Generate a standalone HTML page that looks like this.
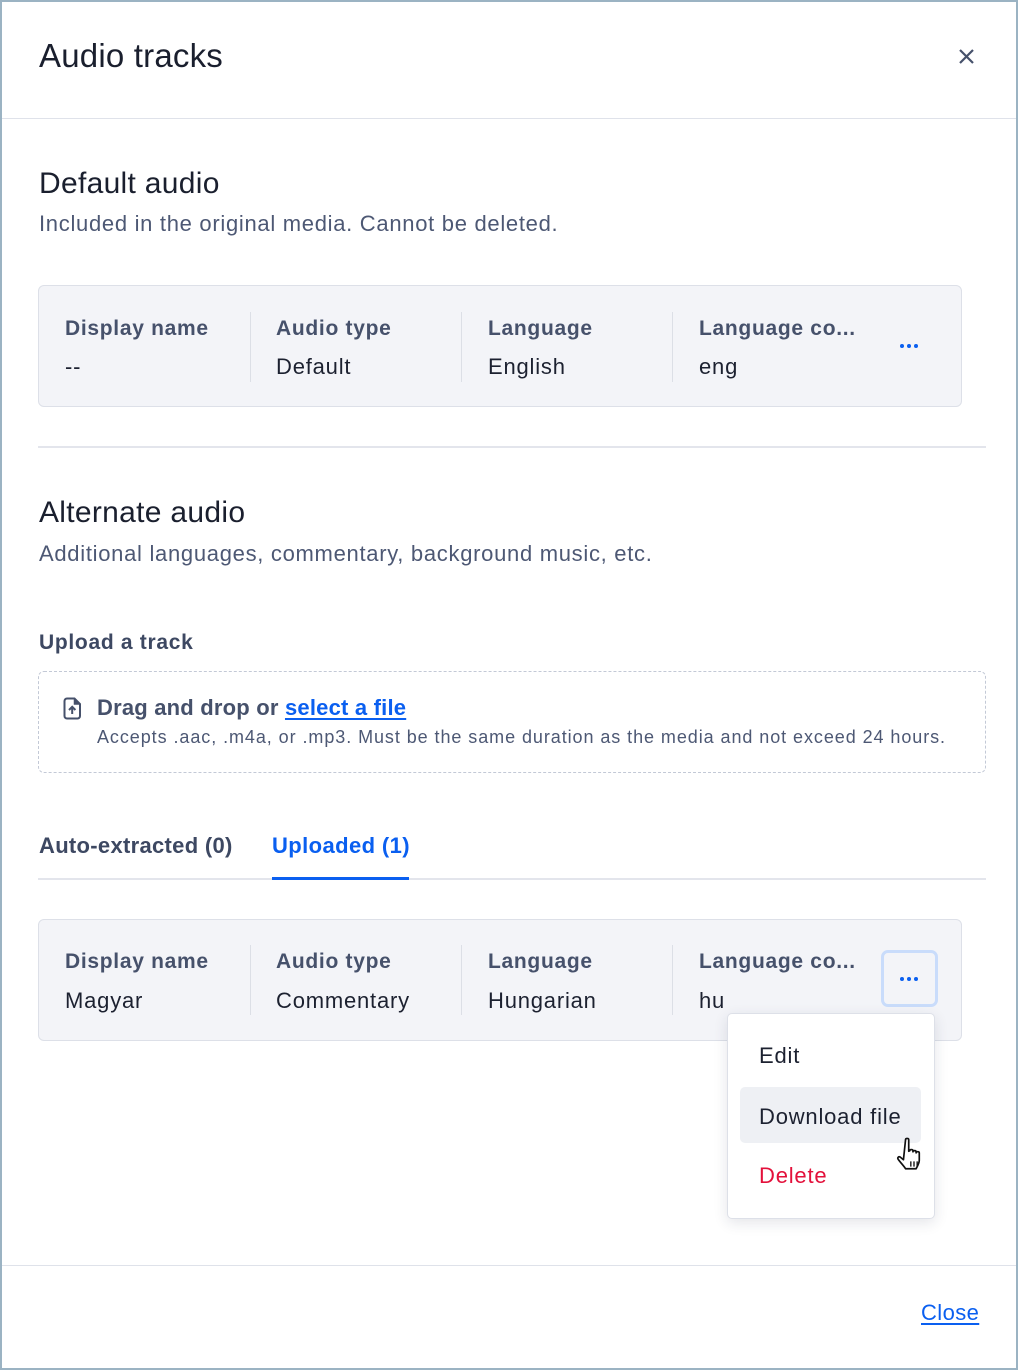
<!DOCTYPE html>
<html><head><meta charset="utf-8"><style>
*{margin:0;padding:0;box-sizing:border-box}
html,body{width:1018px;height:1370px;overflow:hidden;background:#fff}
body{font-family:"Liberation Sans","DejaVu Sans",sans-serif;position:relative;color:#1a1f2e}
.frame{position:absolute;left:0;top:0;width:1018px;height:1370px;border:2px solid #9bb3c3}
.a{position:absolute;white-space:nowrap;line-height:1}
.hl{position:absolute;height:1px;background:#dfe2ea}
.box{position:absolute;left:38px;width:924px;height:122px;background:#f3f4f8;border:1px solid #dde0e8;border-radius:6px}
.th{font-size:21px;font-weight:bold;color:#46516b;letter-spacing:.7px}
.td{font-size:22px;color:#1c2130;letter-spacing:.8px}
.vd{position:absolute;width:1px;height:70px;background:#dcdfe6}
.sub{font-size:22px;color:#4d5874;letter-spacing:.7px}
.h2{font-size:30px;color:#1a1f2e;letter-spacing:.3px}
.dots{position:absolute;width:20px;height:4px}
.dots i{position:absolute;top:0;width:4px;height:4px;border-radius:50%;background:#0a5ff0}
</style></head><body>
<div class="frame"></div>

<div class="a" style="left:39px;top:39px;font-size:33px;letter-spacing:.2px;color:#1a1f2e">Audio tracks</div>
<svg style="position:absolute;left:958px;top:48px" width="17" height="17" viewBox="0 0 17 17"><path d="M2 2L15 15M15 2L2 15" stroke="#46516b" stroke-width="2.2"/></svg>
<div class="hl" style="left:2px;width:1014px;top:118px"></div>

<div class="a h2" style="left:39px;top:169px">Default audio</div>
<div class="a sub" style="left:39px;top:213px">Included in the original media. Cannot be deleted.</div>

<div class="box" style="top:285px"></div>
<div class="a th" style="left:65px;top:318px">Display name</div>
<div class="a td" style="left:65px;top:356px">--</div>
<div class="vd" style="left:250px;top:312px"></div>
<div class="a th" style="left:276px;top:318px">Audio type</div>
<div class="a td" style="left:276px;top:356px">Default</div>
<div class="vd" style="left:461px;top:312px"></div>
<div class="a th" style="left:488px;top:318px">Language</div>
<div class="a td" style="left:488px;top:356px">English</div>
<div class="vd" style="left:672px;top:312px"></div>
<div class="a th" style="left:699px;top:318px">Language co...</div>
<div class="a td" style="left:699px;top:356px">eng</div>
<div class="dots" style="left:900px;top:344px"><i style="left:0"></i><i style="left:7px"></i><i style="left:14px"></i></div>

<div class="hl" style="left:38px;width:948px;top:446px;height:2px;background:#e3e5ec"></div>

<div class="a h2" style="left:39px;top:498px">Alternate audio</div>
<div class="a sub" style="left:39px;top:543px">Additional languages, commentary, background music, etc.</div>

<div class="a th" style="left:39px;top:632px;color:#3d4862">Upload a track</div>
<div style="position:absolute;left:38px;top:671px;width:948px;height:102px;border:1px dashed #c3c9d6;border-radius:6px"></div>
<svg style="position:absolute;left:63px;top:697px" width="19" height="23" viewBox="0 0 19 23"><path d="M4 1.5H11.5L17 7V19a2.5 2.5 0 0 1-2.5 2.5H4A2.5 2.5 0 0 1 1.5 19V4A2.5 2.5 0 0 1 4 1.5Z" fill="none" stroke="#46516b" stroke-width="2"/><path d="M11.5 1.5V7H17" fill="#46516b" stroke="#46516b" stroke-width="1.5"/><path d="M9.2 17V10M6 13L9.2 9.8L12.4 13" fill="none" stroke="#46516b" stroke-width="2"/></svg>
<div class="a th" style="left:97px;top:697px;font-size:22px;letter-spacing:.2px">Drag and drop or <span style="color:#0a5ff0;text-decoration:underline;text-underline-offset:3px">select a file</span></div>
<div class="a" style="left:97px;top:728px;font-size:18px;color:#4d5874;letter-spacing:.93px">Accepts .aac, .m4a, or .mp3. Must be the same duration as the media and not exceed 24 hours.</div>

<div class="a th" style="left:39px;top:835px;font-size:22px;color:#3d4862;letter-spacing:.3px">Auto-extracted (0)</div>
<div class="a th" style="left:272px;top:835px;font-size:22px;color:#0a5ff0;letter-spacing:.4px">Uploaded (1)</div>
<div class="hl" style="left:38px;width:948px;top:878px;height:2px;background:#e3e5ec"></div>
<div style="position:absolute;left:272px;top:877px;width:137px;height:3px;background:#0a5ff0"></div>

<div class="box" style="top:919px"></div>
<div class="a th" style="left:65px;top:951px">Display name</div>
<div class="a td" style="left:65px;top:990px">Magyar</div>
<div class="vd" style="left:250px;top:945px"></div>
<div class="a th" style="left:276px;top:951px">Audio type</div>
<div class="a td" style="left:276px;top:990px">Commentary</div>
<div class="vd" style="left:461px;top:945px"></div>
<div class="a th" style="left:488px;top:951px">Language</div>
<div class="a td" style="left:488px;top:990px">Hungarian</div>
<div class="vd" style="left:672px;top:945px"></div>
<div class="a th" style="left:699px;top:951px">Language co...</div>
<div class="a td" style="left:699px;top:990px">hu</div>
<div style="position:absolute;left:881px;top:950px;width:57px;height:57px;border:3px solid #c9dcfb;border-radius:7px;background:#f3f4f8"></div>
<div class="dots" style="left:900px;top:977px"><i style="left:0"></i><i style="left:7px"></i><i style="left:14px"></i></div>

<div style="position:absolute;left:727px;top:1013px;width:208px;height:206px;background:#fff;border:1px solid #dde0e8;border-radius:5px;box-shadow:0 4px 14px rgba(30,40,70,.12)"></div>
<div class="a td" style="left:759px;top:1045px;font-size:22px">Edit</div>
<div style="position:absolute;left:740px;top:1087px;width:181px;height:56px;background:#eef0f4;border-radius:5px"></div>
<div class="a td" style="left:759px;top:1106px;font-size:22px">Download file</div>
<div class="a td" style="left:759px;top:1165px;font-size:22px;color:#e3113b">Delete</div>
<svg style="position:absolute;left:896px;top:1136px" width="36" height="38" viewBox="0 0 34 36"><path d="M9 3.5c0-1.6 3-1.6 3 0v11l1-.5c0-1.5 3-1.5 3 0v1c0-1.5 3-1.5 3 0v1c0-1.5 3-1.5 3 0v7c0 3-2 6-3 8h-10c-1-2-5-6-7-9-1-1.5.5-3 2-2l3 2.5z" fill="#fff" stroke="#111" stroke-width="1.6" stroke-linejoin="round"/><path d="M14 24v5M17 24v5M20 24v5" stroke="#111" stroke-width="1.3"/></svg>

<div class="hl" style="left:2px;width:1014px;top:1265px"></div>
<div class="a" style="left:921px;top:1302px;font-size:22px;color:#0a5ff0;text-decoration:underline;text-underline-offset:3px;letter-spacing:.4px">Close</div>
</body></html>
